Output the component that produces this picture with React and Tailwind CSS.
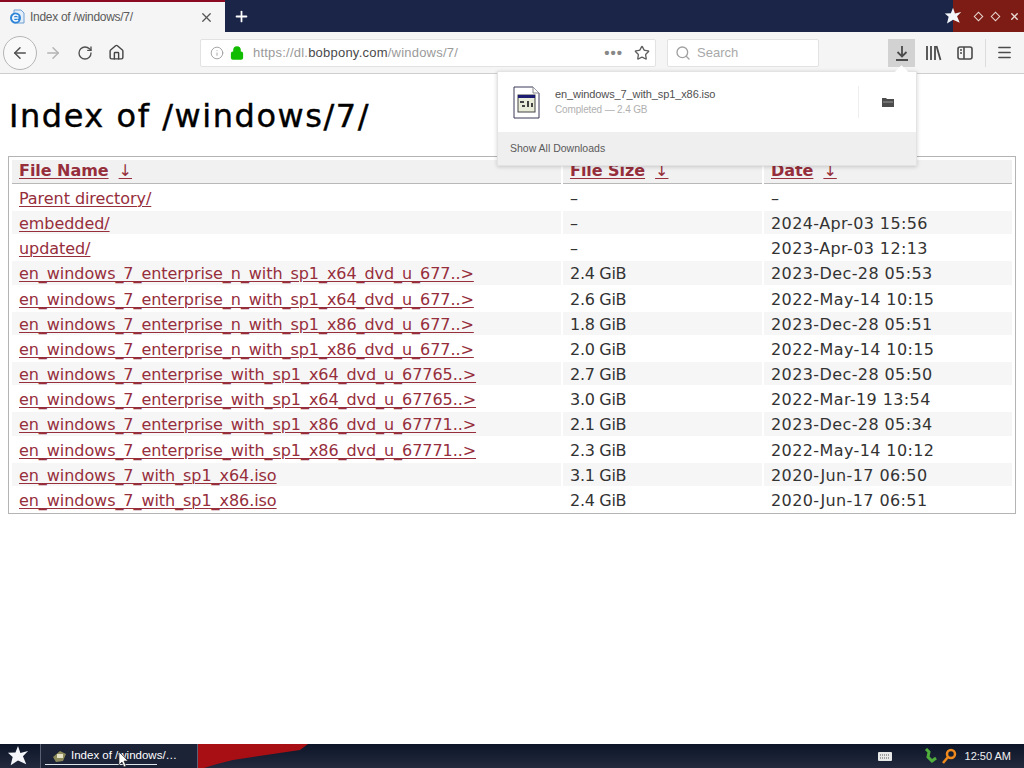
import { ArrowLeft, ArrowRight, RotateCw, House, Info, Lock, Star, Search, X, Plus, Menu } from 'lucide-react';

const UI_FONT = "font-['Liberation_Sans',sans-serif]";
const PAGE_FONT = "font-['DejaVu_Sans',sans-serif]";

const ROWS = [
  ['Parent directory/', '–', '–'],
  ['embedded/', '–', '2024-Apr-03 15:56'],
  ['updated/', '–', '2023-Apr-03 12:13'],
  ['en_windows_7_enterprise_n_with_sp1_x64_dvd_u_677..>', '2.4 GiB', '2023-Dec-28 05:53'],
  ['en_windows_7_enterprise_n_with_sp1_x64_dvd_u_677..>', '2.6 GiB', '2022-May-14 10:15'],
  ['en_windows_7_enterprise_n_with_sp1_x86_dvd_u_677..>', '1.8 GiB', '2023-Dec-28 05:51'],
  ['en_windows_7_enterprise_n_with_sp1_x86_dvd_u_677..>', '2.0 GiB', '2022-May-14 10:15'],
  ['en_windows_7_enterprise_with_sp1_x64_dvd_u_67765..>', '2.7 GiB', '2023-Dec-28 05:50'],
  ['en_windows_7_enterprise_with_sp1_x64_dvd_u_67765..>', '3.0 GiB', '2022-Mar-19 13:54'],
  ['en_windows_7_enterprise_with_sp1_x86_dvd_u_67771..>', '2.1 GiB', '2023-Dec-28 05:34'],
  ['en_windows_7_enterprise_with_sp1_x86_dvd_u_67771..>', '2.3 GiB', '2022-May-14 10:12'],
  ['en_windows_7_with_sp1_x64.iso', '3.1 GiB', '2020-Jun-17 06:50'],
  ['en_windows_7_with_sp1_x86.iso', '2.4 GiB', '2020-Jun-17 06:51'],
];

function BurstStar({ size, className }) {
  return (
    <svg width={size} height={size} viewBox="0 0 24 24" className={className}>
      <path d="M12 1l2.6 7.6L23 6.5l-5.6 5.7L21 21l-9-4-8 5 2.2-9L1 8.5l8.2-.3z" fill="#f4f6fa" />
    </svg>
  );
}

function TabStrip() {
  return (
    <div className="flex h-8 bg-[#1a2548]">
      <div className={`flex w-[225px] items-center border-t-2 border-[#8c0a22] bg-[#f5f5f5] pl-[9px] pr-[11px] text-[12px] tracking-[-0.3px] text-[#5b5b5b] ${UI_FONT}`}>
        <svg width="16" height="16" viewBox="0 0 16 16">
          <path d="M5 1h7l3 3v10H5z" fill="#e4eef9" stroke="#6f9fd3" />
          <circle cx="6.5" cy="9" r="5.5" fill="#2f86d8" />
          <path d="M3.5 9h6M9.3 7.5A3 3 0 1 0 9 11" stroke="#fff" strokeWidth="1.4" fill="none" />
        </svg>
        <span className="ml-[5px] flex-1">Index of /windows/7/</span>
        <X size={15} strokeWidth={2} className="text-[#555]" />
      </div>
      <div className="flex w-8 items-center justify-center">
        <Plus size={17} strokeWidth={2.5} className="text-white" />
      </div>
      <div className="flex-1" />
      <div className="flex w-[71px] items-center bg-[#7d1c15]">
        <BurstStar size={18} className="-ml-[9px]" />
        <div className="ml-[13px] flex items-center gap-[10px]">
          <div className="h-[7px] w-[7px] rotate-45 border border-[#e8d8d0]" />
          <div className="h-[7px] w-[7px] rotate-45 border border-[#e8d8d0]" />
          <X size={11} strokeWidth={3} className="text-[#eadcd4]" />
        </div>
      </div>
    </div>
  );
}

function NavBar() {
  return (
    <div className={`flex h-[42px] items-center border-b border-[#cfcfcf] bg-[#f5f5f5] ${UI_FONT}`}>
      <div className="ml-[3px] flex h-[34px] w-[34px] items-center justify-center rounded-full border border-[#b5b5b5] bg-[#f9f9f9]">
        <ArrowLeft size={18} strokeWidth={2} className="text-[#505050]" />
      </div>
      <ArrowRight size={18} strokeWidth={2} className="ml-[7px] text-[#b4b4b4]" />
      <RotateCw size={16} strokeWidth={2} className="ml-[15px] text-[#505050]" />
      <House size={17} strokeWidth={2} className="ml-[15px] text-[#454545]" />

      <div className="ml-[75px] flex h-[28px] w-[456px] items-center rounded-[2px] border border-[#e2e2e2] bg-white pl-[9px] pr-[5px] text-[13px]">
        <Info size={14} strokeWidth={1.5} className="text-[#9a9a9a]" />
        <Lock size={14} strokeWidth={3} className="ml-[6px] fill-[#12bc00] text-[#12bc00]" />
        <span className="ml-[9px] mt-[1px] flex-1 tracking-[0.22px] text-[#9a9a9a]">
          https://dl.<span className="text-[#4a4a4a]">bobpony.com</span>/windows/7/
        </span>
        <span className="text-[15px] font-bold leading-none tracking-[1px] text-[#888]">•••</span>
        <Star size={16} strokeWidth={2} className="ml-[11px] text-[#606060]" />
      </div>

      <div className="ml-[11px] flex h-[28px] w-[152px] items-center rounded-[2px] border border-[#e2e2e2] bg-white pl-[7px] text-[13px] text-[#a8a8a8]">
        <Search size={16} strokeWidth={2} className="text-[#a0a0a0]" />
        <span className="ml-[6px] mt-[1px]">Search</span>
      </div>

      <div className="ml-[69px] flex h-[28px] w-[27px] items-center justify-center bg-[#d2d2d2]">
        <svg width="16" height="18" viewBox="0 0 16 18" fill="none" stroke="#4b4b4b" strokeWidth="1.8">
          <path d="M8 2v10M3.5 8L8 12.5 12.5 8M2 16h12" />
        </svg>
      </div>
      <svg width="17" height="16" viewBox="0 0 17 16" fill="none" stroke="#4b4b4b" strokeWidth="1.8" className="ml-[10px]">
        <path d="M2 1v14M6 1v14M10 1v14M11.5 1l4 14" />
      </svg>
      <svg width="16" height="14" viewBox="0 0 16 14" fill="none" stroke="#4b4b4b" strokeWidth="1.6" className="ml-[15px]">
        <rect x="1" y="1" width="14" height="12" rx="2" />
        <path d="M7 1v12M3 4h2M3 7h2" />
      </svg>
      <div className="ml-[12px] h-[28px] border-l border-[#dcdcdc]" />
      <Menu size={17} strokeWidth={2} className="ml-[10px] text-[#4b4b4b]" />
    </div>
  );
}

function DownloadsPanel() {
  return (
    <div className={`absolute left-[497px] top-[71px] z-10 w-[420px] border border-[#e3e3e3] bg-white shadow-[0_1px_4px_rgba(0,0,0,0.18)] ${UI_FONT}`}>
      <div className="absolute left-[399px] top-[-5px] h-[9px] w-[9px] rotate-45 bg-white" />
      <div className="flex h-[60px] items-center pl-[15px] pr-[21px]">
        <svg width="27" height="33" viewBox="0 0 27 33">
          <path d="M1 1h19l6 6v25H1z" fill="#fff" stroke="#39395a" />
          <path d="M20 1v6h6" fill="#fff" stroke="#888" />
          <rect x="5" y="9" width="17" height="17" fill="#e8ecd8" stroke="#444" />
          <rect x="5" y="9" width="17" height="3" fill="#1c1c70" />
          <path d="M7 15h4v2H7zM9 19h3v2H9zM14 15h2v6h-2zM18 17h2v4h-2z" fill="#444" />
        </svg>
        <div className="ml-[15px] flex-1">
          <div className="text-[11px] leading-[16px] tracking-[-0.1px] text-[#505050]">en_windows_7_with_sp1_x86.iso</div>
          <div className="text-[10px] leading-[16px] tracking-[-0.15px] text-[#b0b0b0]">Completed — 2.4 GB</div>
        </div>
        <div className="mr-[22px] h-[32px] border-l border-[#eeeeee]" />
        <svg width="14" height="12" viewBox="0 0 14 12" fill="#4c4c4c">
          <path d="M1 2h4l1 1h7v8H1z" />
          <path d="M2 6h10" stroke="#bbb" strokeWidth="0.7" />
        </svg>
      </div>
      <div className="flex h-[33px] items-center bg-[#efefef] pl-[12px] text-[10.5px] text-[#5a5a5a]">Show All Downloads</div>
    </div>
  );
}

function FileTable() {
  const link = 'text-[#962e3c] underline decoration-1 underline-offset-2';
  return (
    <div className={`mx-2 border border-[#b4b4b4] px-[1px] pt-[1px] text-[16px] leading-[20px] text-[#333] ${PAGE_FONT}`}>
      <table className="w-full table-fixed border-separate border-spacing-x-[2px] border-spacing-y-[2px]">
        <colgroup>
          <col className="w-[549px]" />
          <col className="w-[199px]" />
          <col />
        </colgroup>
        <thead>
          <tr className="h-[24px] text-left">
            {['File Name', 'File Size', 'Date'].map(h => (
              <th key={h} className="border-b border-[#b8b8b8] bg-[#f1f1f1] px-[7px] pb-[1px] pt-[1px] align-top font-bold">
                <a className={`tracking-[-0.05px] ${link}`}>{h}</a>
                <a className={`ml-[5px] pl-[5px] pr-[8px] font-normal ${link}`}>↓</a>
              </th>
            ))}
          </tr>
        </thead>
        <tbody>
          {ROWS.map((r, i) => (
            <tr key={i} className="h-[23.17px]">
              <td className={`px-[7px] pt-[3px] align-top ${i % 2 ? 'bg-[#f6f6f6]' : ''}`}>
                <a className={`tracking-[-0.06px] ${link}`}>{r[0]}</a>
              </td>
              <td className={`px-[7px] pt-[3px] align-top tracking-[-0.3px] ${i % 2 ? 'bg-[#f6f6f6]' : ''}`}>{r[1]}</td>
              <td className={`px-[7px] pt-[3px] align-top tracking-[0.4px] ${i % 2 ? 'bg-[#f6f6f6]' : ''}`}>{r[2]}</td>
            </tr>
          ))}
        </tbody>
      </table>
    </div>
  );
}

function TaskBar() {
  return (
    <div className={`relative flex h-6 items-center bg-gradient-to-b from-[#0d1528] to-[#232a3e] text-white ${UI_FONT}`}>
      <BurstStar size={22} className="ml-[7px]" />
      <div className="relative ml-[11px] flex h-full w-[158px] items-center border-x border-[#5b6172] bg-[#1c2337] pl-[10px] text-[11.5px]">
        <svg width="17" height="14" viewBox="0 0 17 14">
          <path d="M2 8l7-6 6 3-3 7-7 1z" fill="#8c8a5a" />
          <path d="M6 5h6v4H6z" fill="#e6e2c8" />
        </svg>
        <span className="ml-[3px] whitespace-nowrap">Index of /windows/…</span>
        <div className="absolute bottom-[3px] left-[4px] h-[1px] w-[112px] bg-[#dfe3ea]" />
      </div>
      <div className="h-full w-[110px] bg-[#a80f14] [clip-path:polygon(0_0,110px_0,102px_6px,68px_11px,35px_16px,19px_20px,6px_24px,0_24px)]" />
      <div className="flex-1" />
      <svg width="14" height="9" viewBox="0 0 14 9" className="mr-[32px]">
        <rect width="14" height="9" rx="1" fill="#e8e8e8" />
        <path d="M2 3h10M2 6h10" stroke="#555" strokeDasharray="1 1" />
      </svg>
      <svg width="14" height="16" viewBox="0 0 14 16" className="mr-[3px]">
        <path d="M2 1l3 3-1 5 4 4 4-3" stroke="#4fae3c" strokeWidth="3" fill="none" />
      </svg>
      <svg width="16" height="16" viewBox="0 0 16 16" fill="none" stroke="#f08a1c" strokeWidth="2.5" className="mr-[8px]">
        <circle cx="10" cy="6" r="4" />
        <path d="M7 9l-5 6" />
      </svg>
      <span className="mr-[13px] whitespace-nowrap text-[11px] text-[#f0f0f0]">12:50 AM</span>

      {/* mouse pointer */}
      <svg width="11" height="16" viewBox="0 0 11 16" className="absolute left-[118px] top-[8px]">
        <path d="M1 0v13l3-3 2 5 2-1-2-5h4z" fill="#fff" stroke="#222" strokeWidth="0.6" />
      </svg>
    </div>
  );
}

export default function App() {
  return (
    <div className="relative flex h-screen w-[1024px] flex-col overflow-hidden bg-white">
      <TabStrip />
      <NavBar />
      <DownloadsPanel />
      <div className="flex-1">
        <h1 className={`ml-[9px] mb-[20px] mt-[22px] text-[32px] font-normal leading-[40px] tracking-[1.55px] text-black [-webkit-text-stroke:0.4px_black] ${PAGE_FONT}`}>
          Index of /windows/7/
        </h1>
        <FileTable />
      </div>
      <TaskBar />
    </div>
  );
}
